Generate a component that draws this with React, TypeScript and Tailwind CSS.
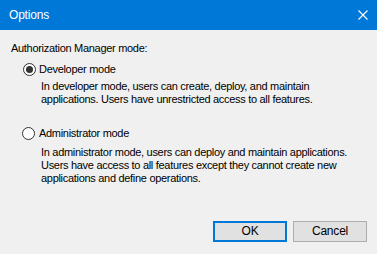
export default function App() {
  return (
    <div
      className="w-[377px] h-[254px] bg-[#f0f0f0] flex flex-col text-[11px] text-black whitespace-nowrap overflow-hidden tracking-[-0.3px]"
      style={{ fontFamily: '"Liberation Sans", Arial, sans-serif' }}
    >
      <div className="h-[30px] shrink-0 bg-[#0078d7] flex items-center justify-between pl-[9px] pr-[9px] text-white text-[12px] tracking-[-0.2px]">
        <span className="leading-[15px]">Options</span>
        <svg width="10" height="10" viewBox="0 0 10 10">
          <path d="M0.5 0.5 L9.5 9.5 M9.5 0.5 L0.5 9.5" stroke="white" strokeWidth="1.1" fill="none" />
        </svg>
      </div>

      <div className="flex flex-col shrink-0 pl-[11px] pt-[11px]">
        <div className="leading-[15px]">Authorization Manager mode:</div>

        <label className="mt-[6px] ml-[12px] flex items-center gap-[3px] leading-[15px]">
          <span className="w-[13px] h-[13px] shrink-0 rounded-full border border-[#333333] bg-white flex items-center justify-center">
            <span className="w-[7px] h-[7px] rounded-full bg-[#333333]" />
          </span>
          <span>Developer mode</span>
        </label>
        <div className="ml-[30px] mt-[3px] leading-[13px]">
          <div>In developer mode, users can create, deploy, and maintain</div>
          <div>applications. Users have unrestricted access to all features.</div>
        </div>

        <label className="mt-[20px] ml-[11px] flex items-center gap-[4px] leading-[15px]">
          <span className="w-[13px] h-[13px] shrink-0 rounded-full border border-[#333333] bg-white" />
          <span>Administrator mode</span>
        </label>
        <div className="ml-[30px] mt-[5px] leading-[13px]">
          <div>In administrator mode, users can deploy and maintain applications.</div>
          <div>Users have access to all features except they cannot create new</div>
          <div>applications and define operations.</div>
        </div>
      </div>

      <div className="mt-[36px] shrink-0 flex justify-end gap-[6px] pr-[10px] text-[12px] tracking-[-0.2px]">
        <button className="w-[74px] h-[21px] bg-[#e1e1e1] border-2 border-[#0078d7] flex items-center justify-center leading-[15px]">
          OK
        </button>
        <button className="w-[74px] h-[21px] bg-[#e1e1e1] border border-[#adadad] flex items-center justify-center leading-[15px]">
          Cancel
        </button>
      </div>
    </div>
  );
}
